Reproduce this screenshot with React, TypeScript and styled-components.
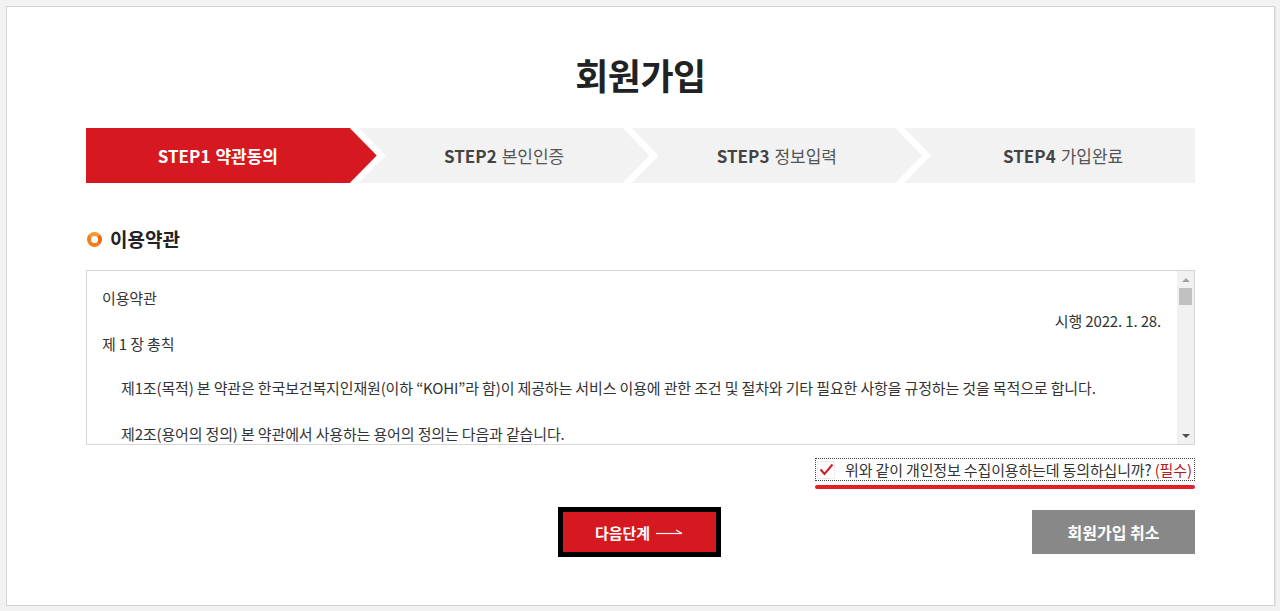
import React from "react";
import styled, { createGlobalStyle, css } from "styled-components";

const GlobalStyle = createGlobalStyle`
  html, body { margin: 0; padding: 0; background: #f2f2f2; }
  body { font-family: "Noto Sans CJK KR", "Noto Sans", sans-serif; color: #333; }
  * { box-sizing: border-box; }
  p { margin: 0; }
`;

const Page = styled.div`
  padding: 6px 0 0 6px;
`;

const Panel = styled.main`
  width: 1269px;
  height: 600px;
  background: #fff;
  border: 1px solid #d4d4d4;
  box-shadow: 1px 1px 0 #e2e2e2;
  padding: 47px 79px 0 79px;
  display: flex;
  flex-direction: column;
`;

const Title = styled.h1`
  margin: 0;
  text-align: center;
  font-size: 36px;
  line-height: 40px;
  font-weight: 700;
  color: #222;
  letter-spacing: -0.5px;
`;

const Steps = styled.ol`
  list-style: none;
  margin: 34px 0 0;
  padding: 0;
  display: flex;
  height: 55px;
`;

const Step = styled.li<{ $active?: boolean; $first?: boolean; $last?: boolean }>`
  flex: 1 1 0;
  min-width: 0;
  display: flex;
  align-items: center;
  justify-content: center;
  font-size: 17px;
  background: ${(p) => (p.$active ? "#d61920" : "#f2f2f2")};
  color: ${(p) => (p.$active ? "#fff" : "#555")};
  margin-left: ${(p) => (p.$first ? "0" : "-18px")};
  ${(p) =>
    p.$first
      ? css`clip-path: polygon(0 0, calc(100% - 27px) 0, 100% 50%, calc(100% - 27px) 100%, 0 100%);`
      : p.$last
      ? css`clip-path: polygon(0 0, 100% 0, 100% 100%, 0 100%, 27px 50%);`
      : css`clip-path: polygon(0 0, calc(100% - 27px) 0, 100% 50%, calc(100% - 27px) 100%, 0 100%, 27px 50%);`}
`;

const StepLabel = styled.span<{ $first?: boolean; $last?: boolean }>`
  display: flex;
  gap: 5px;
  white-space: nowrap;
  padding-left: ${(p) => (p.$first ? "0" : "27px")};
  padding-right: ${(p) => (p.$last ? "0" : "27px")};
`;

const StepNo = styled.strong<{ $active?: boolean }>`
  font-weight: 700;
  color: ${(p) => (p.$active ? "#fff" : "#444")};
`;

const StepName = styled.span<{ $active?: boolean }>`
  font-weight: ${(p) => (p.$active ? 700 : 400)};
`;

const SectionHeader = styled.h2`
  margin: 42px 0 0;
  display: flex;
  align-items: center;
  gap: 8px;
  font-size: 19px;
  line-height: 28px;
  font-weight: 700;
  color: #222;
`;

const Ring = styled.span`
  width: 15px;
  height: 15px;
  border-radius: 50%;
  border: 4px solid #f0801f;
  border-top-color: #f39a2c;
  border-right-color: #ea6a14;
  margin-left: 1px;
`;

const TermsBox = styled.div`
  margin-top: 17px;
  height: 175px;
  border: 1px solid #d6d6d6;
  display: flex;
`;

const TermsText = styled.div`
  flex: 1;
  overflow: hidden;
  padding: 15px 16px 0 15px;
  font-size: 15px;
  line-height: 23px;
  letter-spacing: -0.15px;
  color: #333;
`;

const Line = styled.p<{ $gap?: number; $indent?: boolean; $right?: boolean }>`
  margin-top: ${(p) => p.$gap ?? 0}px;
  padding-left: ${(p) => (p.$indent ? "19px" : "0")};
  text-align: ${(p) => (p.$right ? "right" : "left")};
  white-space: nowrap;
`;

const ScrollBar = styled.div`
  width: 17px;
  background: #f1f1f1;
  display: flex;
  flex-direction: column;
`;

const ScrollButton = styled.span<{ $down?: boolean }>`
  height: 17px;
  display: flex;
  align-items: center;
  justify-content: center;
  &::after {
    content: "";
    width: 0;
    height: 0;
    border-left: 4px solid transparent;
    border-right: 4px solid transparent;
    ${(p) =>
      p.$down
        ? css`border-top: 4px solid #505050;`
        : css`border-bottom: 4px solid #a3a3a3;`}
  }
`;

const Thumb = styled.span`
  height: 17px;
  margin: 0 2px;
  background: #c1c1c1;
`;

const Track = styled.span`
  flex: 1;
`;

const AgreeRow = styled.div`
  margin-top: 13px;
  display: flex;
  justify-content: flex-end;
`;

const AgreeWrap = styled.div`
  display: flex;
  flex-direction: column;
  width: 380px;
`;

const AgreeLabel = styled.label`
  height: 23px;
  display: flex;
  align-items: center;
  gap: 10px;
  padding: 0 1px 0 2px;
  outline: 1px dotted #444;
  outline-offset: -1px;
  font-size: 15px;
  letter-spacing: -0.15px;
  color: #333;
  white-space: nowrap;
  cursor: pointer;
`;

const CheckBox = styled.span`
  width: 18px;
  height: 18px;
  border: 1px solid #ececec;
  display: flex;
  align-items: center;
  justify-content: center;
`;

const Required = styled.span`
  color: #b01c24;
`;

const Underline = styled.span`
  margin-top: 4px;
  height: 4px;
  border-radius: 2px;
  background: #e31e26;
`;

const ButtonRow = styled.div`
  margin-top: 18px;
  display: grid;
  grid-template-columns: 1fr auto 1fr;
  align-items: center;
`;

const NextButton = styled.button`
  grid-column: 2;
  width: 163px;
  height: 50px;
  margin-right: 3px;
  background: #d61920;
  border: 5px solid #000;
  color: #fff;
  font-family: inherit;
  font-size: 15px;
  font-weight: 700;
  display: flex;
  align-items: center;
  justify-content: center;
  gap: 6px;
  cursor: pointer;
`;

const CancelButton = styled.button`
  grid-column: 3;
  justify-self: end;
  width: 163px;
  height: 44px;
  background: #888;
  border: 0;
  color: #fff;
  font-family: inherit;
  font-size: 16px;
  font-weight: 700;
  cursor: pointer;
`;

const steps = [
  { no: "STEP1", name: "약관동의" },
  { no: "STEP2", name: "본인인증" },
  { no: "STEP3", name: "정보입력" },
  { no: "STEP4", name: "가입완료" },
];

export default function App() {
  return (
    <>
      <GlobalStyle />
      <Page>
        <Panel>
          <Title>회원가입</Title>
          <Steps>
            {steps.map((s, i) => {
              const first = i === 0;
              const last = i === steps.length - 1;
              return (
                <Step key={s.no} $active={first} $first={first} $last={last}>
                  <StepLabel $first={first} $last={last}>
                    <StepNo $active={first}>{s.no}</StepNo>
                    <StepName $active={first}>{s.name}</StepName>
                  </StepLabel>
                </Step>
              );
            })}
          </Steps>

          <SectionHeader>
            <Ring />
            이용약관
          </SectionHeader>

          <TermsBox>
            <TermsText>
              <Line>이용약관</Line>
              <Line $right>시행 2022. 1. 28.</Line>
              <Line>제 1 장 총칙</Line>
              <Line $gap={21} $indent>
                제1조(목적) 본 약관은 한국보건복지인재원(이하 “KOHI”라 함)이 제공하는 서비스 이용에 관한 조건 및 절차와 기타 필요한 사항을 규정하는 것을 목적으로 합니다.
              </Line>
              <Line $gap={23} $indent>
                제2조(용어의 정의) 본 약관에서 사용하는 용어의 정의는 다음과 같습니다.
              </Line>
            </TermsText>
            <ScrollBar aria-hidden>
              <ScrollButton />
              <Thumb />
              <Track />
              <ScrollButton $down />
            </ScrollBar>
          </TermsBox>

          <AgreeRow>
            <AgreeWrap>
              <AgreeLabel>
                <CheckBox>
                  <svg width="15" height="13" viewBox="0 0 15 13">
                    <polyline
                      points="1.5,6.5 5.5,11 13.5,1.5"
                      fill="none"
                      stroke="#d61920"
                      strokeWidth="2"
                    />
                  </svg>
                </CheckBox>
                <span>
                  위와 같이 개인정보 수집이용하는데 동의하십니까? <Required>(필수)</Required>
                </span>
              </AgreeLabel>
              <Underline />
            </AgreeWrap>
          </AgreeRow>

          <ButtonRow>
            <NextButton>
              다음단계
              <svg width="27" height="8" viewBox="0 0 27 8">
                <line x1="0" y1="5.5" x2="26" y2="5.5" stroke="#fff" strokeWidth="1.2" />
                <line x1="20" y1="2" x2="26" y2="5.5" stroke="#fff" strokeWidth="1.2" />
              </svg>
            </NextButton>
            <CancelButton>회원가입 취소</CancelButton>
          </ButtonRow>
        </Panel>
      </Page>
    </>
  );
}
